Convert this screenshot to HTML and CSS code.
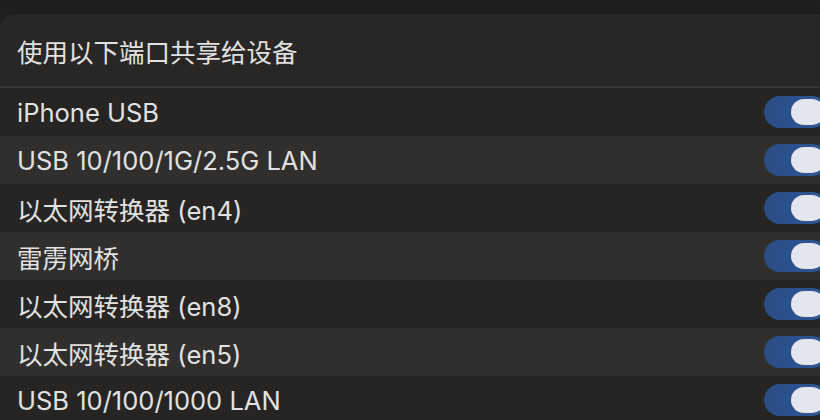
FILE: index.html
```html
<html>
<head>
<meta charset="utf-8">
<title>共享端口</title>
<link rel="stylesheet" href="styles.css">
</head>
<body>
  <div class="panel">
    <div class="panel-title">使用以下端口共享给设备</div>
    <div class="port-list">
      <div class="port-row"><span>iPhone USB</span><span class="switch on"><span class="knob"></span></span></div>
      <div class="port-row"><span>USB 10/100/1G/2.5G LAN</span><span class="switch on"><span class="knob"></span></span></div>
      <div class="port-row"><span>以太网转换器 (en4)</span><span class="switch on"><span class="knob"></span></span></div>
      <div class="port-row"><span>雷雳网桥</span><span class="switch on"><span class="knob"></span></span></div>
      <div class="port-row"><span>以太网转换器 (en8)</span><span class="switch on"><span class="knob"></span></span></div>
      <div class="port-row"><span>以太网转换器 (en5)</span><span class="switch on"><span class="knob"></span></span></div>
      <div class="port-row"><span>USB 10/100/1000 LAN</span><span class="switch on"><span class="knob"></span></span></div>
    </div>
  </div>
</body>
</html>
```
FILE: styles.css
```css
html,body { margin: 0; padding: 0; background: #1f1f1f; overflow: hidden; font-family: "Inter", "Noto Sans CJK SC", sans-serif; color: #e1e1e1; }
.panel { margin-top: 14px; background: #282725; border-radius: 14px 0 0 0; overflow: hidden; }
.panel-title { height: 72px; display: flex; align-items: center; padding-left: 17px; font-size: 25.5px; border-bottom: 2px solid #363533; }
.port-row { height: 48px; display: flex; align-items: center; justify-content: space-between; padding-left: 17px; font-size: 25.5px; background: #262523; }
.port-row:nth-child(even) { background: #302f2d; }
.switch { display: flex; justify-content: flex-end; align-items: center; width: 64px; height: 32px; margin-right: -8px; padding: 0 3px; box-sizing: border-box; border-radius: 16px; background: linear-gradient(90deg, #294d86, #2e5797); }
.knob { width: 34px; height: 26px; border-radius: 13px; background: #e3e6ef; }
```
